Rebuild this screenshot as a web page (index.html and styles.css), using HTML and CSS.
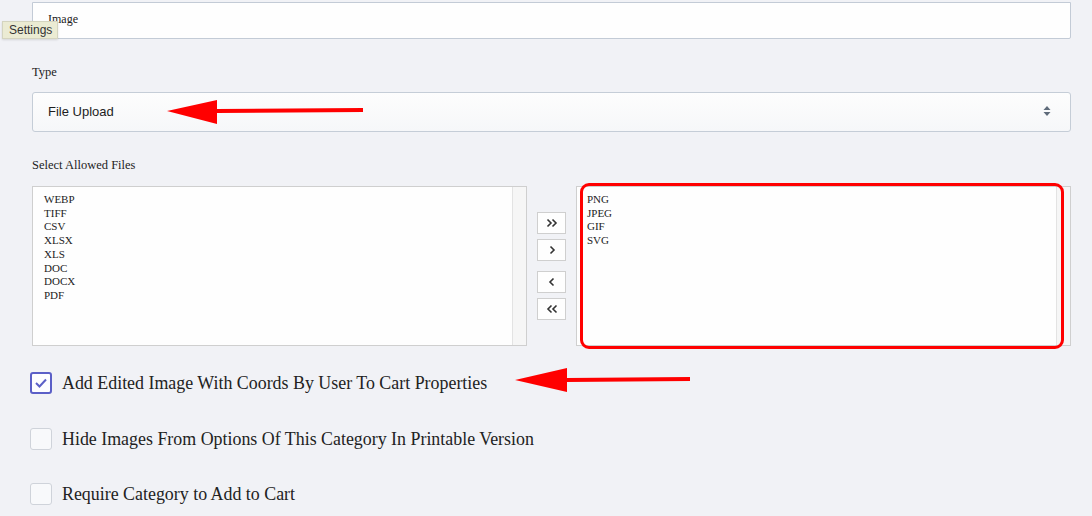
FILE: index.html
```html
<!DOCTYPE html>
<html>
<head>
<meta charset="utf-8">
<link rel="stylesheet" href="styles.css">
</head>
<body>
<div class="page">
  <div class="name-input">Image</div>
  <div class="tooltip">Settings</div>

  <div class="label type-label">Type</div>
  <div class="select">
    <span>File Upload</span>
    <svg class="spin" width="8" height="12" viewBox="0 0 8 12"><path d="M4 1 L7.5 5 H0.5 Z" fill="#5f6b7a"/><path d="M4 11 L7.5 7 H0.5 Z" fill="#5f6b7a"/></svg>
  </div>

  <div class="label files-label">Select Allowed Files</div>
  <div class="dual">
    <div class="list">
      <div class="items">
        <div>WEBP</div><div>TIFF</div><div>CSV</div><div>XLSX</div><div>XLS</div><div>DOC</div><div>DOCX</div><div>PDF</div>
      </div>
      <div class="track"></div>
    </div>
    <div class="buttons">
      <div class="btn">
        <svg width="12" height="10" viewBox="0 0 12 10"><path d="M1.5 1.5 L5 5 L1.5 8.5 M6.5 1.5 L10 5 L6.5 8.5" fill="none" stroke="#333" stroke-width="1.6"/></svg>
      </div>
      <div class="btn">
        <svg width="12" height="10" viewBox="0 0 12 10"><path d="M4.5 1.5 L8 5 L4.5 8.5" fill="none" stroke="#333" stroke-width="1.6"/></svg>
      </div>
      <div class="btn gap">
        <svg width="12" height="10" viewBox="0 0 12 10"><path d="M7.5 1.5 L4 5 L7.5 8.5" fill="none" stroke="#333" stroke-width="1.6"/></svg>
      </div>
      <div class="btn">
        <svg width="12" height="10" viewBox="0 0 12 10"><path d="M5.5 1.5 L2 5 L5.5 8.5 M10.5 1.5 L7 5 L10.5 8.5" fill="none" stroke="#333" stroke-width="1.6"/></svg>
      </div>
    </div>
    <div class="list">
      <div class="items right">
        <div>PNG</div><div>JPEG</div><div>GIF</div><div>SVG</div>
      </div>
      <div class="track"></div>
    </div>
    <div class="highlight"></div>
  </div>

  <div class="checks">
    <label class="check"><span class="box checked"><svg width="14" height="12" viewBox="0 0 14 12"><path d="M2 6 L5.5 9.5 L12 2.5" fill="none" stroke="#5b5fc7" stroke-width="2"/></svg></span>Add Edited Image With Coords By User To Cart Properties</label>
    <label class="check"><span class="box"></span>Hide Images From Options Of This Category In Printable Version</label>
    <label class="check"><span class="box"></span>Require Category to Add to Cart</label>
  </div>

  <svg class="arrow arrow1" width="200" height="26" viewBox="0 0 200 26"><path d="M0 12 L50 1 L50 10 L196 9 L196 13 L50 14 L50 25 Z" fill="#ff0000"/></svg>
  <svg class="arrow arrow2" width="180" height="26" viewBox="0 0 180 26"><path d="M0 13 L52 1 L52 11 L175 10 L175 14 L52 15 L52 25 Z" fill="#ff0000"/></svg>
</div>
</body>
</html>
```

FILE: styles.css
```css
html, body {
  margin: 0;
  padding: 0;
  background: #f1f2f6;
}
body {
  font-family: "Liberation Serif", "Times New Roman", serif;
  color: #222;
  width: 1092px;
  height: 516px;
  overflow: hidden;
}
.page {
  position: relative;
  padding: 2px 21px 0 32px;
}
.name-input {
  box-sizing: border-box;
  height: 37px;
  background: #fefefe;
  border: 1px solid #c3cbd6;
  border-radius: 0 0 2px 2px;
  font-size: 12px;
  padding: 9px 15px 0;
  line-height: 14px;
  color: #222;
}
.tooltip {
  position: absolute;
  left: 2px;
  top: 21px;
  width: 56px;
  height: 18px;
  box-sizing: border-box;
  background: #ebebd3;
  border: 1px solid #d4d4bf;
  box-shadow: 0 1px 2px rgba(0,0,0,0.12);
  font-family: "Liberation Sans", Arial, sans-serif;
  font-size: 12px;
  line-height: 16px;
  color: #333;
  padding-left: 6px;
}
.label {
  font-size: 12.5px;
  line-height: 14px;
  color: #222;
}
.type-label {
  margin-top: 26px;
}
.select {
  margin-top: 13px;
  box-sizing: border-box;
  height: 40px;
  border: 1px solid #c5cdd7;
  border-radius: 3px;
  background: linear-gradient(#fdfdfd, #f6f7f9);
  display: flex;
  align-items: center;
  justify-content: space-between;
  padding: 0 19px 2px 15px;
  font-family: "Liberation Sans", Arial, sans-serif;
  font-size: 13px;
  color: #1d1d1d;
}
.files-label {
  margin-top: 26px;
}
.dual {
  position: relative;
  margin-top: 14px;
  display: flex;
  align-items: center;
  height: 160px;
}
.list {
  box-sizing: border-box;
  width: 496px;
  height: 160px;
  background: #fefefe;
  border: 1px solid #cfcfcf;
  display: flex;
}
.items {
  flex: 1;
  padding: 6px 0 0 11px;
  font-size: 11px;
  line-height: 13.7px;
  color: #222;
}
.items.right {
  padding-left: 10px;
}
.track {
  width: 13px;
  background: #f6f6f6;
  border-left: 1px solid #e3e3e3;
}
.buttons {
  display: flex;
  flex-direction: column;
  gap: 5px;
  margin: 0 10px 0 10px;
  width: 29px;
}
.btn {
  box-sizing: border-box;
  height: 22px;
  width: 29px;
  background: #fefefe;
  border: 1px solid #cfcfcf;
  display: flex;
  align-items: center;
  justify-content: center;
}
.btn.gap {
  margin-top: 5px;
}
.highlight {
  position: absolute;
  left: 548px;
  top: -3px;
  width: 484px;
  height: 166px;
  box-sizing: border-box;
  border: 3.5px solid #ff0000;
  border-radius: 9px;
}
.checks {
  margin-top: 26px;
  display: flex;
  flex-direction: column;
  gap: 33.5px;
  margin-left: -2px;
}
.check {
  display: flex;
  align-items: center;
  gap: 10px;
  font-size: 17.9px;
  line-height: 22px;
  color: #222;
}
.box {
  box-sizing: border-box;
  width: 22px;
  height: 22px;
  border: 1px solid #cfd3da;
  border-radius: 3px;
  background: #f8f9fb;
  display: flex;
  align-items: center;
  justify-content: center;
}
.box.checked {
  border: 2px solid #5b5fc7;
  background: #fdfdff;
}
.arrow {
  position: absolute;
}
.arrow1 {
  left: 167px;
  top: 99px;
}
.arrow2 {
  left: 515px;
  top: 367px;
}
```
